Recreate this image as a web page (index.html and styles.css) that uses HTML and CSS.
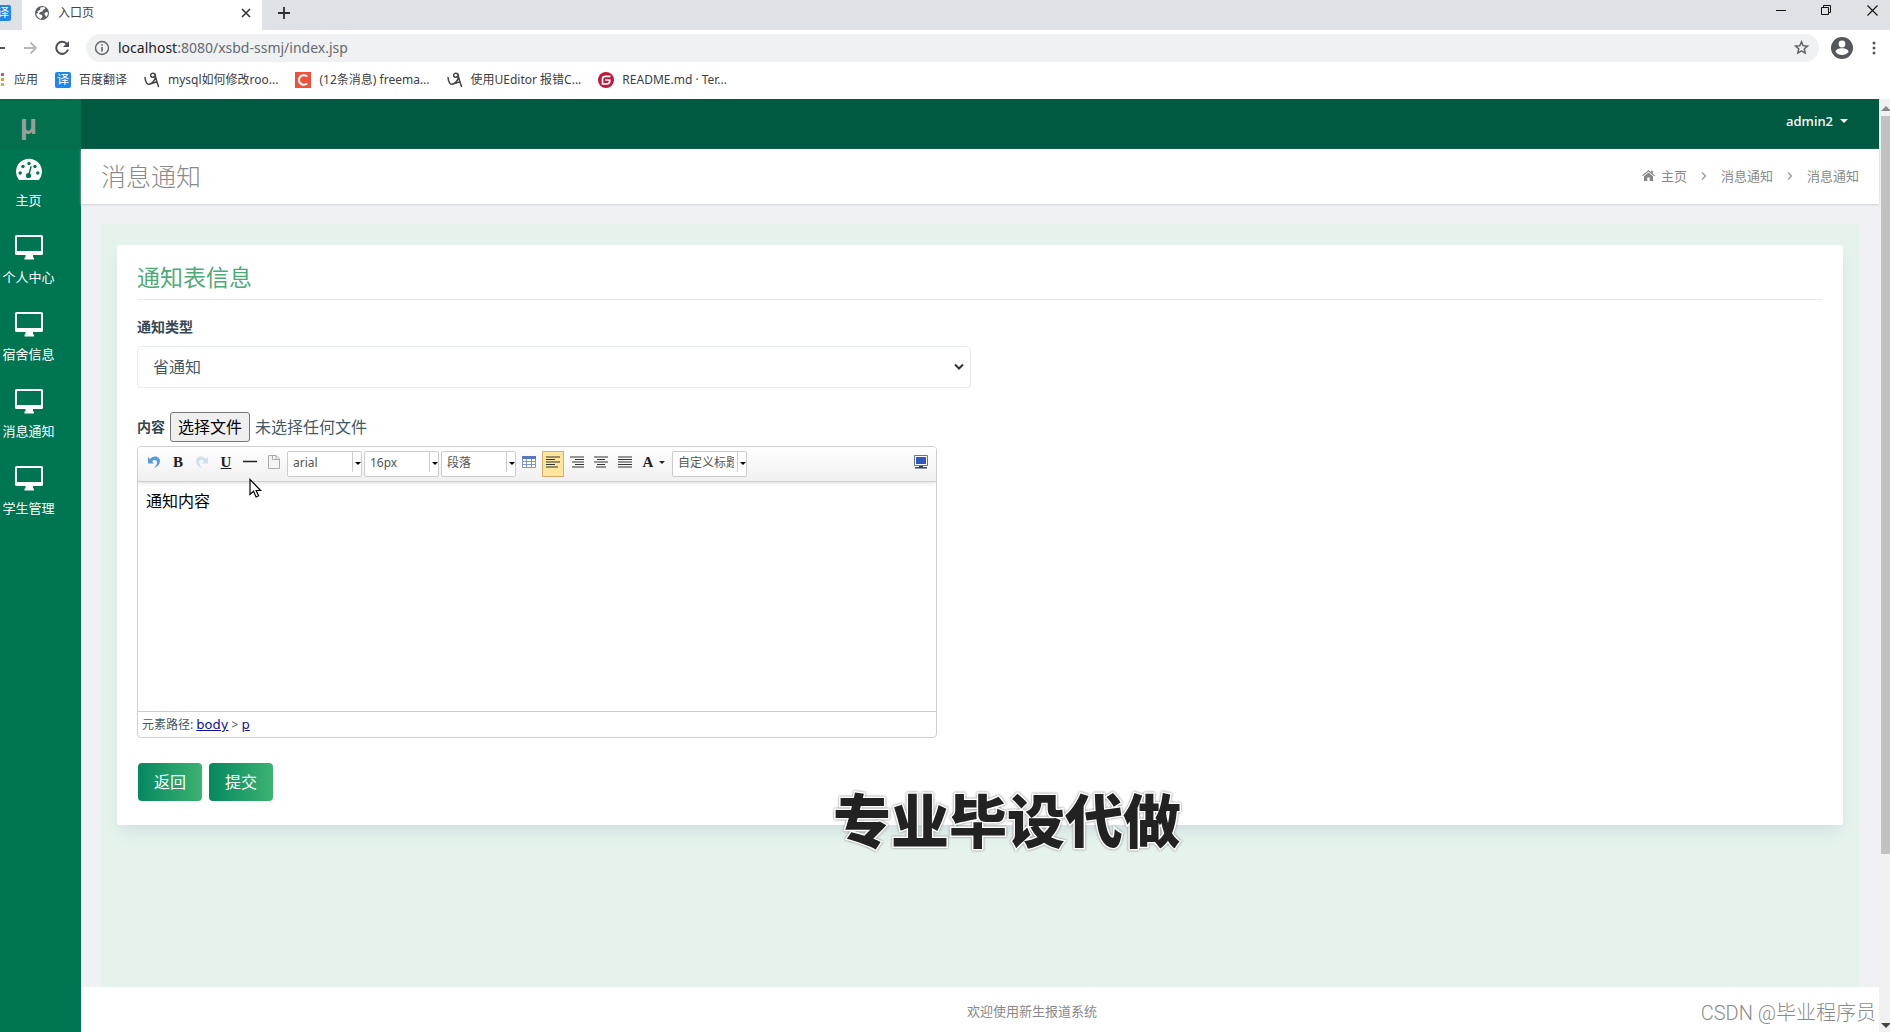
FILE: index.html
```html
<!DOCTYPE html>
<html lang="zh-CN">
<head>
<meta charset="utf-8">
<title>入口页</title>
<link rel="stylesheet" href="styles.css">
</head>
<body>
<svg class="defs" aria-hidden="true">
  <symbol id="monitor" viewBox="0 0 28 26"><path fill="currentColor" fill-rule="evenodd" d="M1.500 0h25a1.500 1.500 0 0 1 1.500 1.500v17a1.500 1.500 0 0 1-1.500 1.500H18v2.500h1v2H9.500v-2h1V20h-9A1.500 1.500 0 0 1 0 18.500v-17A1.500 1.500 0 0 1 1.500 0zM2 2v14h24V2z"/></symbol>
  <symbol id="scribble" viewBox="0 0 16 16"><path fill="none" stroke="#444" stroke-width="1.500" stroke-linecap="round" d="M1 5.500c.5 4 2 7 4 6.800 3-.3 6-4 6.500-7.500C11.800 2 10 1 8.500 1.200 6.500 1.500 6 4 7.500 5c1.500.8 3-.3 3.700-1.700C12 7 13 10 14.500 14.500M5 12.300c2-.5 5-2 8-2.300"/></symbol>
</svg>

<div class="tabstrip">
  <div class="tab-prev"><span class="yi">译</span></div>
  <div class="tab">
    <svg width="16" height="16" viewBox="0 0 16 16"><circle cx="8" cy="8" r="7" fill="#5a5d61"/><path fill="#fff" d="M6.500 2.500 10 2l1.500 1.500L9 5l-.5 1.500L6 7 5 9l3 1 .5 2-2 2C4 13 2.500 11 2.300 8.500L4 8l-.5-2L6 5zM12 7l2 .5c0 2-.8 3.500-2 4.500l-.8-2L10 9z"/></svg>
    <span class="tab-name">入口页</span>
    <button class="bare" aria-label="关闭标签页"><svg width="10" height="10" viewBox="0 0 10 10"><path stroke="#333" stroke-width="1.600" d="m1 1 8 8M9 1 1 9"/></svg></button>
  </div>
  <button class="bare new-tab" aria-label="新标签页"><svg width="12" height="12" viewBox="0 0 12 12"><path stroke="#2b2e31" stroke-width="1.800" d="M6 0v12M0 6h12"/></svg></button>
  <div class="window-controls">
    <button class="bare" aria-label="最小化"><svg width="10" height="10" viewBox="0 0 10 10"><path stroke="#111" d="M0 5.500h10"/></svg></button>
    <button class="bare" aria-label="还原"><svg width="11" height="11" viewBox="0 0 11 11"><path fill="none" stroke="#111" d="M.5 2.500h7v7h-7zM2.500 2.500v-2h7v7h-2"/></svg></button>
    <button class="bare" aria-label="关闭"><svg width="11" height="11" viewBox="0 0 11 11"><path stroke="#111" stroke-width="1.100" d="m.5.500 10 10M10.500.500l-10 10"/></svg></button>
  </div>
</div>

<div class="toolbar">
  <button class="bare back" aria-label="后退"><svg width="6" height="14" viewBox="0 0 6 14"><path stroke="#555" stroke-width="2" d="M0 7h5"/></svg></button>
  <button class="bare forward" aria-label="前进"><svg width="14" height="14" viewBox="0 0 14 14"><path fill="none" stroke="#b5b7ba" stroke-width="1.800" d="M0 7h12M6.500 1.500 12 7l-5.500 5.500"/></svg></button>
  <button class="bare reload" aria-label="重新加载"><svg width="16" height="16" viewBox="0 0 16 16"><path fill="none" stroke="#4d5156" stroke-width="2" d="M13 4.200A6 6 0 1 0 14 9.500"/><path fill="#4d5156" d="M15 1v6H9z"/></svg></button>
  <div class="address">
    <svg width="16" height="16" viewBox="0 0 16 16"><circle cx="8" cy="8" r="6.500" fill="none" stroke="#5f6368" stroke-width="1.400"/><path stroke="#5f6368" stroke-width="1.600" d="M8 7v4.500M8 4.200v1.600"/></svg>
    <span class="url"><b>localhost</b>:8080/xsbd-ssmj/index.jsp</span>
    <svg width="15" height="15" viewBox="0 0 24 24"><path fill="none" stroke="#5f6368" stroke-width="2.400" d="m12 3 2.700 6.200 6.800.6-5.100 4.500 1.500 6.600-5.900-3.500-5.900 3.500 1.500-6.600L2.500 9.800l6.800-.6z"/></svg>
  </div>
  <button class="bare" aria-label="用户"><svg width="22" height="22" viewBox="0 0 22 22"><circle cx="11" cy="11" r="11" fill="#54575b"/><circle cx="11" cy="7" r="3.400" fill="#fff"/><path fill="#fff" d="M4.500 15c0-5 13-5 13 0-3 4-10 4-13 0z"/></svg></button>
  <button class="bare menu" aria-label="菜单"><svg width="4" height="14" viewBox="0 0 4 14"><g fill="#54575b"><circle cx="2" cy="2" r="1.500"/><circle cx="2" cy="7" r="1.500"/><circle cx="2" cy="12" r="1.500"/></g></svg></button>
</div>

<nav class="bookmarks">
  <a href="#"><svg width="6" height="14" viewBox="0 0 6 14"><path fill="#d9534f" d="M1 0h3v3H1z"/><path fill="#e0a030" d="M1 5h3v3H1z"/><path fill="#d8b22d" d="M1 10h3v3H1z"/></svg><span>应用</span></a>
  <a href="#"><span class="yi">译</span><span>百度翻译</span></a>
  <a href="#"><svg width="16" height="16"><use href="#scribble"/></svg><span>mysql如何修改roo...</span></a>
  <a href="#"><svg width="16" height="16" viewBox="0 0 16 16"><path fill="#f1503a" d="M0 0h16v16H0z"/><path fill="none" stroke="#fff" stroke-width="1.900" d="M12.300 4.400C9.500 2.200 4 3 4 8s5.500 5.800 8.300 3.600"/></svg><span>(12条消息) freema...</span></a>
  <a href="#"><svg width="16" height="16"><use href="#scribble"/></svg><span>使用UEditor 报错C...</span></a>
  <a href="#"><svg width="16" height="16" viewBox="0 0 16 16"><circle cx="8" cy="8" r="8" fill="#c1183a"/><path fill="none" stroke="#fff" stroke-width="1.700" d="M12.500 4.300H7.300Q4.500 4.300 4.500 7v4.800h4.700q2.500 0 2.500-2.500V8H7"/></svg><span>README.md · Ter...</span></a>
</nav>

<div class="page">
  <aside class="sidebar">
    <div class="logo">µ</div>
    <a href="#"><svg width="26" height="26" viewBox="0 0 26 26"><path fill="#fff" d="M3 22a13 13 0 1 1 20 0q-.6 0-1 0H4z"/><g fill="#00754f"><circle cx="4.200" cy="15" r="1.700"/><circle cx="7" cy="8.500" r="1.700"/><circle cx="13" cy="5.500" r="1.700"/><circle cx="19" cy="8.500" r="1.700"/><circle cx="21.800" cy="15" r="1.700"/><circle cx="12.500" cy="17.500" r="2.600"/><path d="m14.500 8 1.300.4-2.300 9-1.500-.4z"/></g></svg><span>主页</span></a>
    <a href="#"><svg width="28" height="26"><use href="#monitor"/></svg><span>个人中心</span></a>
    <a href="#"><svg width="28" height="26"><use href="#monitor"/></svg><span>宿舍信息</span></a>
    <a href="#"><svg width="28" height="26"><use href="#monitor"/></svg><span>消息通知</span></a>
    <a href="#"><svg width="28" height="26"><use href="#monitor"/></svg><span>学生管理</span></a>
  </aside>

  <div class="main">
    <header class="topbar"><button class="bare user">admin2<i class="caret"></i></button></header>
    <div class="titlebar">
      <h1>消息通知</h1>
      <nav class="crumbs">
        <svg width="13" height="11" viewBox="0 0 13 11"><path fill="#888" d="M6.500 0 9 2V.8h1.800v2.700L13 5.500l-.8.800-5.700-4.700L.8 6.300 0 5.500zM6.500 2.600 11 6.300V11H7.700V7.500H5.300V11H2V6.300z"/></svg>
        <a href="#">主页</a>
        <svg class="sep" width="6" height="8" viewBox="0 0 6 8"><path fill="none" stroke="#999" stroke-width="1.300" d="m1 .5 3.500 3.500L1 7.500"/></svg>
        <a href="#">消息通知</a>
        <svg class="sep" width="6" height="8" viewBox="0 0 6 8"><path fill="none" stroke="#999" stroke-width="1.300" d="m1 .5 3.500 3.500L1 7.500"/></svg>
        <span>消息通知</span>
      </nav>
    </div>

    <div class="content">
      <div class="panel">
        <form class="card">
          <h2>通知表信息</h2>
          <label class="field-label" for="type">通知类型</label>
          <div class="type-wrap">
            <select id="type" class="type"><option>省通知</option></select>
            <svg class="chevron" width="10" height="8" viewBox="0 0 10 8"><path fill="none" stroke="#333" stroke-width="2" d="m1 1.500 4 4 4-4"/></svg>
          </div>
          <div class="file-row">
            <label class="field-label" for="file">内容</label>
            <input type="file" id="file" class="file-input" tabindex="-1">
            <button type="button" class="file-button" onclick="document.getElementById('file').click()">选择文件</button>
            <span>未选择任何文件</span>
          </div>
          <div class="editor">
            <div class="editor-tools">
              <button type="button" class="tool" aria-label="撤销"><svg width="14" height="14" viewBox="0 0 14 14"><path fill="#5b9bdc" d="M1 2v6.500h6L5 6.300c2-2 5-1.500 5 1 0 2-1 3.700-3 5.700 4-1.500 6-4 6-7C13 1.500 7-.5 3 4z"/></svg></button>
              <button type="button" class="tool serif" aria-label="加粗">B</button>
              <button type="button" class="tool faded" aria-label="重做"><svg width="14" height="14" viewBox="0 0 14 14"><path fill="#8db8e4" d="M13 2v6.500H7l2-2.200c-2-2-5-1.500-5 1 0 2 1 3.700 3 5.700-4-1.500-6-4-6-7C1 1.500 7-.5 11 4z"/></svg></button>
              <button type="button" class="tool serif under" aria-label="下划线">U</button>
              <button type="button" class="tool" aria-label="分隔线"><svg width="14" height="14" viewBox="0 0 14 14"><path stroke="#222" stroke-width="1.300" d="M0 6.500h14"/></svg></button>
              <button type="button" class="tool" aria-label="清空文档"><svg width="12" height="14" viewBox="0 0 12 14"><path fill="#f4f4f4" stroke="#aaa" d="M.5.500H8L11.500 4v9.500H.5zM4.500.5v4h7M8 .5V4"/></svg></button>
              <span class="combo"><select aria-label="字体"><option>arial</option></select></span>
              <span class="combo"><select aria-label="字号"><option>16px</option></select></span>
              <span class="combo"><select aria-label="段落格式"><option>段落</option></select></span>
              <button type="button" class="tool" aria-label="插入表格"><svg width="14" height="12" viewBox="0 0 14 12"><path fill="#fff" stroke="#7b96d0" d="M.5.500h13v11H.5zM.5 5.500h13M.5 8.500h13M4.500 3v9M9.500 3v9"/><path fill="#5577c4" d="M0 0h14v3H0z"/></svg></button>
              <button type="button" class="tool active" aria-label="居左对齐"><svg width="14" height="12" viewBox="0 0 14 12"><path stroke="#333" stroke-width="1.200" d="M0 1h14M0 3.500h9M0 6h14M0 8.500h9M0 11h12"/></svg></button>
              <button type="button" class="tool" aria-label="居右对齐"><svg width="14" height="12" viewBox="0 0 14 12"><path stroke="#333" stroke-width="1.200" d="M0 1h14M5 3.500h9M2 6h12M5 8.500h9M2 11h12"/></svg></button>
              <button type="button" class="tool" aria-label="居中对齐"><svg width="14" height="12" viewBox="0 0 14 12"><path stroke="#333" stroke-width="1.200" d="M0 1h14M3 3.500h8M0 6h14M3 8.500h8M2 11h10"/></svg></button>
              <button type="button" class="tool" aria-label="两端对齐"><svg width="14" height="12" viewBox="0 0 14 12"><path stroke="#333" stroke-width="1.200" d="M0 1h14M0 3.500h14M0 6h14M0 8.500h14M0 11h14"/></svg></button>
              <button type="button" class="tool serif color" aria-label="字体颜色">A<i class="caret"></i></button>
              <span class="combo"><select aria-label="自定义标题"><option>自定义标题</option></select></span>
              <button type="button" class="tool full" aria-label="全屏"><svg width="14" height="14" viewBox="0 0 14 14"><path fill="#fff" stroke="#667788" d="M.5.500h13v10H.5z"/><path fill="#3159bd" d="M2 2h10v7H2z"/><path fill="#345" d="M5 11h4v1H5zM1 12h12v1.500H1z"/></svg></button>
            </div>
            <textarea class="editor-body" aria-label="通知内容">通知内容</textarea>
            <div class="editor-path">元素路径: <a href="#">body</a> &gt; <a href="#">p</a></div>
          </div>
          <div class="actions">
            <button type="button" class="btn">返回</button>
            <button type="button" class="btn">提交</button>
          </div>
        </form>
      </div>
    </div>
    <footer class="footer">欢迎使用新生报道系统</footer>
  </div>

  <div class="scrollbar"><i class="arrow up"></i><div class="thumb"></div><i class="arrow down"></i></div>
</div>

<svg class="pointer" width="14" height="21" viewBox="0 0 14 21"><path fill="#fff" stroke="#000" stroke-width="1.200" d="M1 1.500v15l3.500-3.200 2.600 5.700 2.500-1.200-2.500-5.300h4.500z"/></svg>
<div class="caption">专业毕设代做</div>
<div class="watermark">CSDN @毕业程序员</div>
</body>
</html>
```
FILE: styles.css
```css
* { box-sizing: border-box; }
body {
  margin: 0;
  min-height: 100vh;
  display: flex;
  flex-direction: column;
  position: relative;
  overflow: hidden;
  background: #fff;
  color: #455a64;
  font: 13px/20px "Noto Sans", "Noto Sans CJK SC", sans-serif;
}
a { color: inherit; text-decoration: none; }
svg { display: block; flex: none; }
.defs { position: absolute; width: 0; height: 0; }
button, select, textarea { font: inherit; color: inherit; margin: 0; }
.bare { border: 0; padding: 0; background: none; display: flex; align-items: center; }

/* browser chrome */
.tabstrip { display: flex; height: 30px; background: #dee1e6; }
.tab-prev { width: 22px; padding-top: 5px; display: flex; justify-content: flex-start; overflow: hidden; }
.tab-prev .yi { margin-left: -5px; }
.yi {
  width: 16px; height: 16px; border-radius: 2px; flex: none;
  background: #1f86ee; color: #fff; font-size: 12px; line-height: 16px; text-align: center;
}
.tab {
  width: 240px; display: flex; align-items: center; gap: 8px;
  padding: 0 11px 4px 12px; background: #fff; color: #444; font-size: 12px;
}
.tab-name { flex: 1; }
.new-tab { margin-left: 16px; padding-bottom: 4px; }
.window-controls { margin-left: auto; display: flex; gap: 35px; padding: 0 12px 10px 0; }
.toolbar { display: flex; align-items: center; height: 35px; padding-right: 14px; }
.forward { margin-left: 18px; }
.reload { margin-left: 16px; }
.address {
  flex: 1; display: flex; align-items: center; gap: 8px; height: 28px;
  margin: 0 12px 0 16px; padding: 0 10px 0 8px; border-radius: 14px; background: #f0f1f3;
}
.url { flex: 1; color: #666a6e; font-size: 14px; }
.url b { color: #222; font-weight: 400; }
.menu { margin-left: 19px; }
.bookmarks {
  display: flex; align-items: center; gap: 17px; height: 34px; padding-bottom: 4px;
  color: #3c4043; font-size: 12px;
}
.bookmarks a { display: flex; align-items: center; gap: 8px; }

/* application frame */
.page { flex: 1; display: flex; }
.sidebar {
  width: 81px; padding-right: 24px; background: #007551; color: #fff;
  display: flex; flex-direction: column;
}
.logo {
  height: 50px; margin-right: -24px; padding-right: 24px; background: #036f4c;
  color: #999f9c; font-size: 26px; font-weight: 700; line-height: 50px; text-align: center;
}
.sidebar a {
  height: 77px; padding-bottom: 16px; display: flex; flex-direction: column;
  align-items: center; justify-content: flex-end; gap: 6px; white-space: nowrap;
}
.main { flex: 1; display: flex; flex-direction: column; min-width: 0; }
.topbar {
  height: 50px; padding: 0 31px 6px; background: #005a41;
  display: flex; justify-content: flex-end;
}
.user { gap: 7px; color: #fff; font-size: 13px; font-weight: 500; }
.caret { border: 4px solid transparent; border-top-color: currentColor; border-bottom: 0; }
.titlebar {
  height: 55px; padding: 0 20px 2px; background: #fff; box-shadow: 0 1px 2px #ccd0d4;
  display: flex; align-items: center; justify-content: space-between; position: relative;
}
h1, h2 { margin: 0; font-weight: 300; }
h1 { color: #8a8a8a; font-size: 25px; line-height: 36px; }
.crumbs { display: flex; align-items: center; gap: 6px; color: #8a8a8a; }
.sep { margin: 0 8px; }
.content { flex: 1; display: flex; padding: 20px 20px 0; background: #eff1f5; }
.panel { flex: 1; padding: 21px 16px 0; background: #e5f3ec; }
.card { padding: 19px 20px; background: #fff; box-shadow: 0 8px 14px -3px #cfdce2; border-radius: 3px; }
h2 {
  padding-bottom: 9px; border-bottom: 1px solid #e4e7ea; margin-bottom: 17px;
  color: #4dab78; font-size: 23px; line-height: 26px; font-weight: 400;
}
.field-label { display: block; color: #37474f; font-size: 14px; font-weight: 600; }
.type-wrap { position: relative; width: calc(50% - 9px); margin: 9px 0 24px; }
.type {
  display: block; appearance: none; width: 100%; height: 42px; padding: 0 15px;
  border: 1px solid #e9ecef; border-radius: 4px; background: #fff; font-size: 16px;
}
.chevron { position: absolute; right: 7px; top: 17px; pointer-events: none; }
.file-row { display: flex; align-items: center; gap: 5px; font-size: 16px; margin-bottom: 4px; }
.file-input { position: absolute; width: 1px; height: 1px; opacity: 0; pointer-events: none; }
.file-button {
  height: 30px; padding: 0 7px; border: 1px solid #767676; border-radius: 3px;
  background: #efefef; color: #000;
}
.editor {
  width: 800px; max-width: 100%; border: 1px solid #d0d0d0; border-radius: 4px; overflow: hidden;
}
.editor-tools {
  display: flex; align-items: flex-start; gap: 2px; height: 35px; padding: 4px 4px 4px 5px;
  background: linear-gradient(#fff, #f0f0f0); border-bottom: 1px solid #d0d0d0;
  box-shadow: 0 1px 4px #ddd; position: relative;
}
.tool {
  width: 22px; height: 22px; padding: 0; border: 0; background: none; color: #222;
  display: flex; align-items: center; justify-content: center;
}
.serif { font: 700 15px/20px "Liberation Serif", serif; }
.under { text-decoration: underline; }
.faded { opacity: .4; }
.active { height: 26px; padding-bottom: 4px; border: 1px solid #dcac6c; background: #ffe69f; }
.color { width: 32px; gap: 6px; }
.color .caret, .combo::after { border-width: 3px; border-bottom: 0; }
.combo { position: relative; }
.combo select {
  appearance: none; width: 75px; height: 26px; padding: 0 12px 2px 5px;
  border: 1px solid #ccc; border-radius: 2px; background: #fff; color: #555; font-size: 12px;
  text-overflow: clip;
}
.combo::after {
  content: ""; position: absolute; right: 1px; top: 11px;
  border-style: solid; border-color: #000 transparent; pointer-events: none;
}
.combo::before {
  content: ""; position: absolute; right: 9px; top: 1px; height: 20px;
  border-left: 1px solid #ccc; pointer-events: none;
}
.full { margin-left: auto; }
.editor-body {
  display: block; width: 100%; height: 229px; padding: 9px 8px; border: 0; resize: none;
  color: #000; font-size: 16px; background: #fff;
}
.editor-path { height: 26px; padding: 3px 4px; border-top: 1px solid #ccc; font-size: 12px; }
.editor-path a { color: #11a; text-decoration: underline; font-family: "DejaVu Sans", sans-serif; font-size: 13px; }
.actions { display: flex; gap: 7px; padding: 25px 1px 5px; }
.btn {
  width: 64px; height: 38px; border: 0; border-radius: 4px; color: #fff; font-size: 16px;
  background: linear-gradient(90deg, #058760, #3cb371);
}
.footer { height: 45px; padding-left: 104px; line-height: 48px; text-align: center; color: #888; background: #fff; }
.scrollbar {
  width: 11px; background: #f1f1f1; display: flex; flex-direction: column; align-items: center;
  justify-content: space-between; padding: 7px 0 4px 2px; overflow: hidden;
}
.thumb { width: 100%; flex: 0 0 80%; background: #c1c1c1; margin: 5px 0 auto; }
.arrow { border: 5px solid transparent; }
.up { border-top: 0; border-bottom-color: #888; }
.down { border-bottom: 0; border-top-color: #444; }

/* overlays */
.pointer { position: absolute; left: 249px; top: 478px; }
.caption {
  position: absolute; left: 833px; top: 785px; color: #222; white-space: nowrap;
  font-size: 58px; line-height: 72px; font-weight: 900; paint-order: stroke;
  -webkit-text-stroke: 3px #fff; filter: drop-shadow(0 0 1px #777);
}
.watermark {
  position: absolute; right: 14px; bottom: 4px; font-size: 20px; line-height: 30px;
  color: #8b8b8b; font-family: Roboto, "Noto Sans CJK SC", sans-serif;
  font-weight: 300; text-shadow: 1px 1px 0 #fff;
}
```
